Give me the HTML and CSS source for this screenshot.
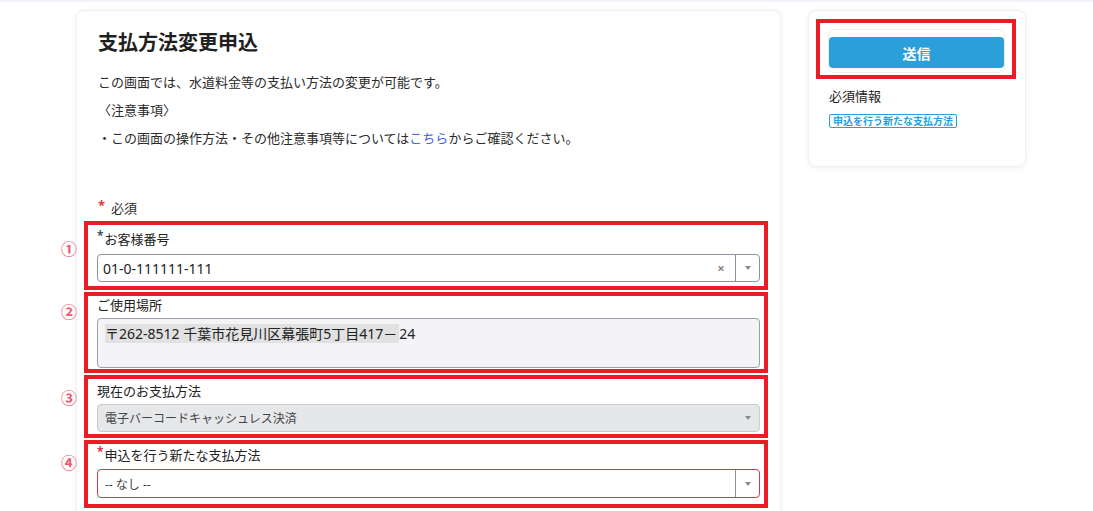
FILE: index.html
```html
<!DOCTYPE html>
<html lang="ja">
<head>
    <meta charset="UTF-8">
    <meta name="viewport" content="width=device-width, initial-scale=1.0">
    <title>支払方法変更申込</title>
    <link rel="stylesheet" href="styles.css">
</head>
<body>

<div class="page">
    <main class="card main">
        <h1 class="title">支払方法変更申込</h1>

        <div class="intro">
            <p>この画面では、水道料金等の支払い方法の変更が可能です。</p>
            <p>〈注意事項〉</p>
            <p>・この画面の操作方法・その他注意事項等については<a href="#">こちら</a>からご確認ください。</p>
        </div>

        <div class="required-note"><span class="req">*</span>必須</div>

        <div class="field field-1">
            <span class="mark">①</span>
            <label class="label"><span class="star">*</span>お客様番号</label>
            <div class="select">
                <span class="select-value">01-0-111111-111</span>
                <span class="select-clear">×</span>
                <span class="select-arrow"></span>
            </div>
        </div>

        <div class="field field-2">
            <span class="mark">②</span>
            <label class="label">ご使用場所</label>
            <div class="textarea"><span class="hl">〒262-8512 千葉市花見川区幕張町5丁目417－</span>24</div>
        </div>

        <div class="field field-3">
            <span class="mark">③</span>
            <label class="label">現在のお支払方法</label>
            <div class="select select-disabled">
                <span class="select-value">電子バーコードキャッシュレス決済</span>
                <span class="select-arrow"></span>
            </div>
        </div>

        <div class="field field-4">
            <span class="mark">④</span>
            <label class="label"><span class="star star-red">*</span>申込を行う新たな支払方法</label>
            <div class="select select-error">
                <span class="select-value">-- なし --</span>
                <span class="select-arrow"></span>
            </div>
        </div>
    </main>

    <aside class="card side">
        <div class="submit-box">
            <div class="submit-wrap">
                <button class="submit">送信</button>
            </div>
        </div>
        <div class="side-info">
            <div class="side-title">必須情報</div>
            <span class="badge">申込を行う新たな支払方法</span>
        </div>
    </aside>
</div>

</body>
</html>
```

FILE: styles.css
```css
html, body {
    overflow: hidden;
}
body {
    margin: 0;
    font-family: "Noto Sans", "Noto Sans CJK JP", sans-serif;
    color: #2b2b2b;
    background: #fff;
    border-top: 2px solid #f1f5fb;
}
.page {
    display: flex;
    align-items: flex-start;
    gap: 27px;
    padding: 8px 0 0 76px;
}
.card {
    background: #fff;
    border: 1px solid #eef0f3;
    border-radius: 8px;
    box-shadow: 0 1px 6px rgba(0, 0, 0, 0.06);
}
.main {
    width: 705px;
    box-sizing: border-box;
    padding: 19px 20px 40px 21px;
}
.title {
    margin: 0;
    font-size: 20px;
    line-height: 26px;
    font-weight: bold;
    color: #1f1f1f;
}
.intro {
    margin-top: 12px;
}
.intro p {
    margin: 0;
    font-size: 13px;
    line-height: 28px;
}
.intro a {
    color: #4767d9;
    text-decoration: none;
}
.required-note {
    margin-top: 46px;
    font-size: 13px;
    line-height: 20px;
}
.req {
    position: relative;
    top: -3px;
    color: #e0334a;
    font-weight: bold;
    margin-right: 6px;
}

/* annotated fields */
.field {
    position: relative;
    margin: 2px -8px 0 -14px;
    border: 4px solid #ea1c26;
    padding: 0 4px 0 9px;
}
.field-1 {
    margin-top: 3px;
    padding-top: 4px;
    padding-bottom: 4px;
}
.field-2 {
    padding-top: 0;
    padding-bottom: 1px;
}
.field-3 {
    padding-top: 3px;
    padding-bottom: 2px;
}
.field-4 {
    padding-top: 2px;
    padding-bottom: 6px;
}
.mark {
    position: absolute;
    left: -27px;
    top: 10px;
    font-size: 16px;
    line-height: 18px;
    font-weight: bold;
    color: #f0566c;
}
.field-1 .mark {
    top: 15px;
}
.field-2 .mark {
    top: 7px;
}
.label {
    display: block;
    font-size: 13px;
    line-height: 18px;
    margin-bottom: 4px;
    color: #222;
}
.field-1 .label {
    line-height: 20px;
}
.star {
    position: relative;
    top: -4px;
    color: #4a5566;
    font-weight: bold;
    font-size: 12px;
    margin-right: 1px;
}
.star-red {
    color: #e0334a;
}

.select {
    display: flex;
    align-items: center;
    height: 28px;
    box-sizing: border-box;
    border: 1px solid #8d939c;
    border-radius: 4px;
    background: #fff;
}
.select-value {
    flex: 1;
    padding-left: 5px;
    font-size: 14px;
    color: #222;
}
.select-clear {
    width: 14px;
    margin-right: 7px;
    text-align: center;
    font-size: 13px;
    font-weight: bold;
    color: #888;
}
.select-arrow {
    align-self: stretch;
    width: 23px;
    border-left: 1px solid #8d939c;
    display: flex;
    align-items: center;
    justify-content: center;
}
.select-arrow::after {
    content: "";
    border-left: 3px solid transparent;
    border-right: 3px solid transparent;
    border-top: 4px solid #8a8a8a;
}
.select-disabled {
    background: #e6e7e9;
    border-color: #c9ccd1;
}
.select-disabled .select-value,
.select-error .select-value {
    padding-left: 7px;
    font-size: 12px;
    color: #444;
}
.select-disabled .select-arrow {
    border-left: none;
}
.select-error {
    height: 29px;
    border-color: #e0334a;
}

.textarea {
    height: 50px;
    box-sizing: border-box;
    border: 1px solid #9aa0aa;
    border-radius: 4px;
    background: #f4f4f6;
    padding: 1px 0 0 7px;
    font-size: 14px;
    line-height: 27px;
    color: #222;
}
.hl {
    background: #e1e1e1;
    padding-right: 2px;
}

/* side panel */
.side {
    width: 218px;
    box-sizing: border-box;
    padding: 8px 9px 36px 7px;
}
.submit-box {
    border: 4px solid #ea1c26;
    padding: 6px 7px 2px 8px;
}
.submit-wrap {
    border: 1px solid #ececec;
    border-radius: 6px;
    padding: 7px 0 4px;
}
.submit {
    display: block;
    width: 100%;
    height: 31px;
    border: none;
    border-radius: 4px;
    background: #2a9fd9;
    color: #fff;
    font-family: inherit;
    font-size: 14px;
    font-weight: bold;
    cursor: pointer;
}
.side-info {
    padding: 7px 13px 0;
}
.side-title {
    font-size: 13px;
    line-height: 20px;
    color: #222;
}
.badge {
    display: inline-block;
    margin-top: 8px;
    border: 1px solid #2a9fd9;
    border-radius: 2px;
    padding: 0 3px;
    font-size: 10px;
    line-height: 12px;
    font-weight: bold;
    color: #2a9fd9;
}
```
